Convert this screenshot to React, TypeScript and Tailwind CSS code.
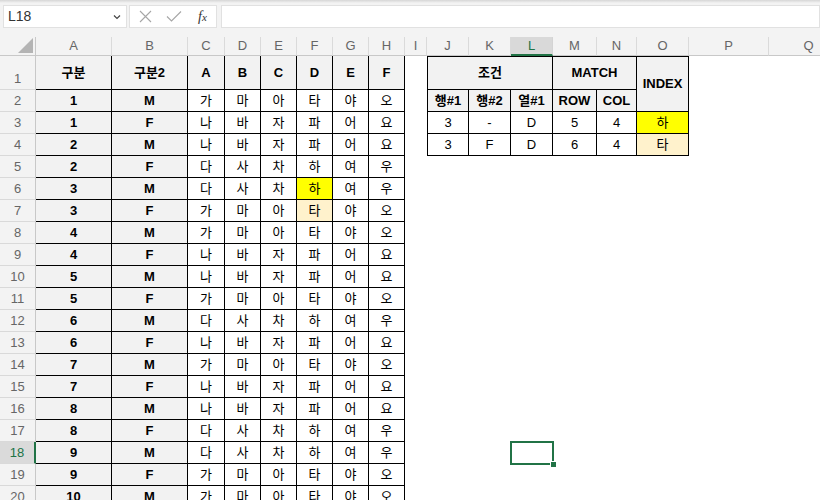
import React from "react";

const COLS = ["A", "B", "C", "D", "E", "F", "G", "H", "I", "J", "K", "L", "M", "N", "O", "P", "Q"];

const DATA: string[][] = [
  ["1", "M", "가", "마", "아", "타", "야", "오"],
  ["1", "F", "나", "바", "자", "파", "어", "요"],
  ["2", "M", "나", "바", "자", "파", "어", "요"],
  ["2", "F", "다", "사", "차", "하", "여", "우"],
  ["3", "M", "다", "사", "차", "하", "여", "우"],
  ["3", "F", "가", "마", "아", "타", "야", "오"],
  ["4", "M", "가", "마", "아", "타", "야", "오"],
  ["4", "F", "나", "바", "자", "파", "어", "요"],
  ["5", "M", "나", "바", "자", "파", "어", "요"],
  ["5", "F", "가", "마", "아", "타", "야", "오"],
  ["6", "M", "다", "사", "차", "하", "여", "우"],
  ["6", "F", "나", "바", "자", "파", "어", "요"],
  ["7", "M", "가", "마", "아", "타", "야", "오"],
  ["7", "F", "나", "바", "자", "파", "어", "요"],
  ["8", "M", "나", "바", "자", "파", "어", "요"],
  ["8", "F", "다", "사", "차", "하", "여", "우"],
  ["9", "M", "다", "사", "차", "하", "여", "우"],
  ["9", "F", "가", "마", "아", "타", "야", "오"],
  ["10", "M", "가", "마", "아", "타", "야", "오"],
];

const RESULTS: string[][] = [
  ["3", "-", "D", "5", "4", "하"],
  ["3", "F", "D", "6", "4", "타"],
];

function fillFor(row: number, col: number) {
  // F6 노랑, F7 연한 주황
  if (row === 6 && col === 5) return "bg-[#ffff00]";
  if (row === 7 && col === 5) return "bg-[#fff2cc]";
  return col < 2 ? "bg-[#f2f2f2]" : "bg-white";
}

function ColHead({ label }: { label: string }) {
  const active = label === "L";
  return (
    <div
      className={
        active
          ? "flex items-center justify-center border-r border-[#d4d4d4] border-b-2 border-b-[#217346] bg-[#d9d9d9] text-[13px] text-[#217346]"
          : "flex items-center justify-center border-r border-[#dadada] border-b border-b-[#c8c8c8] bg-[#f3f3f3] text-[13px] text-[#666]"
      }
    >
      {label}
    </div>
  );
}

function RowHead({ n }: { n: number }) {
  if (n === 18) {
    return (
      <div className="flex items-center justify-center border-r-2 border-[#217346] border-b border-b-[#d9d9d9] bg-[#dadada] text-[13px] text-[#217346]">
        {n}
      </div>
    );
  }
  return (
    <div
      className={
        n === 1
          ? "flex items-end justify-center pb-[1px] border-r border-[#c8c8c8] border-b border-b-[#d9d9d9] bg-[#f3f3f3] text-[13px] text-[#666]"
          : "flex items-center justify-center border-r border-[#c8c8c8] border-b border-b-[#d9d9d9] bg-[#f3f3f3] text-[13px] text-[#666]"
      }
    >
      {n}
    </div>
  );
}

const hdr = "flex items-center justify-center border-r border-b border-black bg-[#f2f2f2] font-bold text-[13px]";
const val = "flex items-center justify-center border-r border-b border-black text-[13px]";

function RightBlock({ row }: { row: number }) {
  if (row === 1) {
    return (
      <>
        <div className={`${hdr} col-span-3 border-l border-t`}>조건</div>
        <div className={`${hdr} col-span-2 border-t`}>MATCH</div>
        <div className={`${hdr} row-span-2 border-t`}>INDEX</div>
      </>
    );
  }
  if (row === 2) {
    return (
      <>
        <div className={`${hdr} border-l`}>행#1</div>
        <div className={hdr}>행#2</div>
        <div className={hdr}>열#1</div>
        <div className={hdr}>ROW</div>
        <div className={hdr}>COL</div>
      </>
    );
  }
  if (row === 3 || row === 4) {
    const r = RESULTS[row - 3];
    return (
      <>
        {r.map((v, i) => (
          <div
            key={i}
            className={`${val} ${i === 0 ? "border-l" : ""} ${
              i === 5 ? (row === 3 ? "bg-[#ffff00]" : "bg-[#fff2cc]") : "bg-white"
            }`}
          >
            {v}
          </div>
        ))}
      </>
    );
  }
  return (
    <>
      <div />
      <div />
      {row === 18 ? (
        <div className="relative">
          <div className="absolute -left-[1px] -top-[1px] h-[24px] w-[44px] border-2 border-[#217346]" />
          <div className="absolute left-[39px] top-[19px] h-[7px] w-[7px] border border-white bg-[#217346]" />
        </div>
      ) : (
        <div />
      )}
      <div />
      <div />
      <div />
    </>
  );
}

function SheetRow({ row }: { row: number }) {
  const cells = row === 1 ? ["구분", "구분2", "A", "B", "C", "D", "E", "F"] : DATA[row - 2];
  return (
    <>
      <RowHead n={row} />
      {cells.map((c, i) =>
        row === 1 ? (
          <div key={i} className={hdr}>
            {c}
          </div>
        ) : (
          <div key={i} className={`${val} ${fillFor(row, i)} ${i < 2 ? "font-bold" : ""}`}>
            {c}
          </div>
        )
      )}
      <div />
      <RightBlock row={row} />
      <div />
      <div />
    </>
  );
}

export default function App() {
  return (
    <div className="h-[500px] w-[820px] overflow-hidden bg-white font-['Liberation_Sans','Noto_Sans_CJK_KR',sans-serif] text-black">
      <div className="h-[37px] bg-[#f3f3f3]">
        <div className="h-[3px] bg-linear-to-b from-[#d6d6d6] to-[#f3f3f3]" />
        <div className="mt-[2px] flex h-[23px] items-stretch">
          <div className="ml-[3px] flex w-[124px] items-center justify-between border border-[#e1e1e1] bg-white pl-[4px] pr-[5px]">
            <span className="text-[14px] text-[#333]">L18</span>
            <svg width="8" height="6" viewBox="0 0 8 6">
              <path d="M1 1.5 L4 4.5 L7 1.5" fill="none" stroke="#444" strokeWidth="1.2" />
            </svg>
          </div>
          <div className="ml-[2px] flex w-[88px] items-center border border-[#e1e1e1] bg-white">
            <svg className="ml-[9px]" width="13" height="13" viewBox="0 0 13 13">
              <path d="M1 1 L12 12 M12 1 L1 12" stroke="#a6a6a6" strokeWidth="1.1" />
            </svg>
            <svg className="ml-[14px]" width="16" height="13" viewBox="0 0 16 13">
              <path d="M1 6.5 L5.5 11 L15 1.5" fill="none" stroke="#a6a6a6" strokeWidth="1.1" />
            </svg>
            <span className="ml-[16px] font-['Liberation_Serif',serif] text-[14px] italic text-[#333]">
              f<span className="text-[11px]">x</span>
            </span>
          </div>
          <div className="ml-[4px] flex-1 border border-[#e1e1e1] bg-white" />
        </div>
      </div>
      <div className="grid grid-cols-[36px_76px_76px_37px_36px_36px_36px_36px_36px_22px_42px_42px_42px_44px_40px_52px_80px_80px] grid-rows-[19px_34px_repeat(19,22px)]">
        <div className="relative border-r border-[#c8c8c8] border-b border-b-[#c8c8c8] bg-[#f3f3f3]">
          <svg className="absolute bottom-[2px] right-[2px]" width="15" height="15" viewBox="0 0 15 15">
            <path d="M15 0 L15 15 L0 15 Z" fill="#b4b4b4" />
          </svg>
        </div>
        {COLS.map((c) => (
          <ColHead key={c} label={c} />
        ))}
        {Array.from({ length: 20 }, (_, i) => (
          <SheetRow key={i} row={i + 1} />
        ))}
      </div>
    </div>
  );
}
